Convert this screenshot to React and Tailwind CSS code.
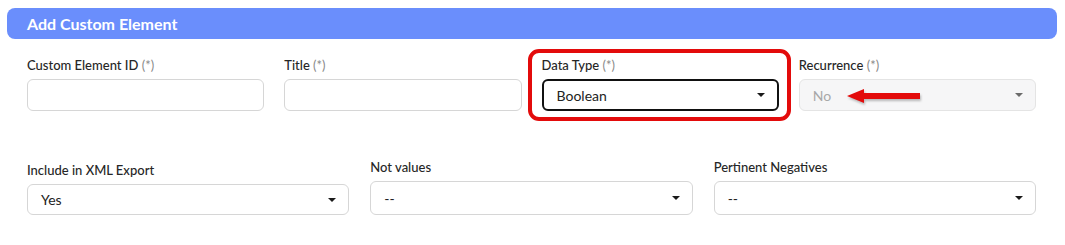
import { useState } from "react";

function Label({ text, required }) {
  return (
    <div className="text-[13px] leading-[16px] font-medium text-[#262626] mb-[6px] whitespace-nowrap">
      {text}
      {required && <span className="font-normal text-[#8a8a8a]"> (*)</span>}
    </div>
  );
}

function Caret({ muted }) {
  return (
    <svg width="8" height="4" viewBox="0 0 8 4" className="shrink-0">
      <path d="M0 0 L8 0 L4 4 Z" fill={muted ? "#6b6b6b" : "#1a1a1a"} />
    </svg>
  );
}

function SelectBox({ value, focused, disabled, className = "h-[32px]" }) {
  return (
    <div
      className={`${className} flex items-center justify-between pl-[13px] pr-[12px] rounded-[6px] text-[14px] ${
        focused
          ? "border-2 border-[#111] bg-white text-[#222]"
          : disabled
          ? "border border-[#e4e4e4] bg-[#f6f6f7] text-[#a8a8a8]"
          : "border border-[#d6d6d6] bg-white text-[#222]"
      }`}
    >
      <span>{value}</span>
      <Caret muted={disabled} />
    </div>
  );
}

function TextBox() {
  return <div className="h-[32px] rounded-[6px] border border-[#d6d6d6] bg-white" />;
}

export default function App() {
  const [dataType] = useState("Boolean");

  return (
    <div className="w-[1065px] h-[245px] bg-white pt-[8px] font-['Lato','Liberation_Sans',sans-serif]">
      {/* header bar */}
      <div className="mx-[7px] w-[1050px] h-[31px] rounded-[8px] bg-[#6a8efc] flex items-center pl-[20px]">
        <span className="text-white font-bold text-[16px]">Add Custom Element</span>
      </div>

      {/* row 1 */}
      <div className="grid grid-cols-4 gap-x-[20px] pl-[27px] w-[1036px] mt-[18px]">
        <div>
          <Label text="Custom Element ID" required />
          <TextBox />
        </div>
        <div>
          <Label text="Title" required />
          <TextBox />
        </div>
        <div className="relative">
          {/* highlight box */}
          <div className="absolute -left-[14px] -right-[12px] -top-[8px] -bottom-[10px] border-[4px] border-[#e30b0b] rounded-[11px] pointer-events-none" />
          <Label text="Data Type" required />
          <SelectBox value={dataType} focused />
        </div>
        <div className="relative">
          <Label text="Recurrence" required />
          <SelectBox value="No" disabled />
          {/* pointer arrow */}
          <svg
            width="76"
            height="18"
            viewBox="0 0 76 18"
            className="absolute left-[47px] top-[30px] drop-shadow-[1px_2px_1px_rgba(0,0,0,0.25)]"
          >
            <path d="M1 9 L18 2 L18 6 L74 6 L74 12 L18 12 L18 16 Z" fill="#e30b0b" />
          </svg>
        </div>
      </div>

      {/* row 2 */}
      <div className="grid grid-cols-3 gap-x-[21px] pl-[27px] w-[1036px] mt-[48px]">
        <div className="pt-[3px]">
          <Label text="Include in XML Export" />
          <SelectBox value="Yes" className="h-[31px]" />
        </div>
        <div>
          <Label text="Not values" />
          <SelectBox value="--" className="h-[34px]" />
        </div>
        <div>
          <Label text="Pertinent Negatives" />
          <SelectBox value="--" className="h-[34px]" />
        </div>
      </div>
    </div>
  );
}
